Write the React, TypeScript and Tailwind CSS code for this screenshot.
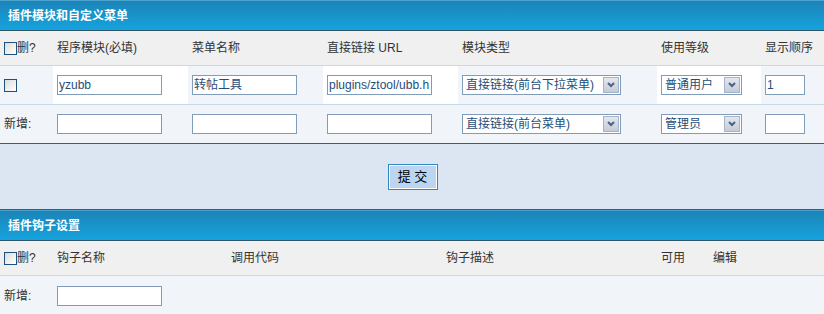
import { FC, ReactNode } from "react";

const font = { fontFamily: '"Liberation Sans", "Noto Sans CJK SC", sans-serif' };

// xp style checkbox
const Check: FC = () => (
  <span className="inline-block w-[13px] h-[13px] border border-[#1c5180] bg-gradient-to-br from-[#dcdcd6] to-white align-middle" />
);

const Field: FC<{ value?: string; w: string }> = ({ value = "", w }) => (
  <div
    className={`${w} h-[20px] border border-[#7f9db9] bg-white text-[12px] leading-[18px] px-[1px] text-[#1f4d78] overflow-hidden whitespace-nowrap`}
  >
    {value}
  </div>
);

const Select: FC<{ value: string; w: string }> = ({ value, w }) => (
  <div
    className={`${w} h-[20px] border border-[#7f9db9] bg-white flex items-center justify-between pl-[3px] pr-[1px]`}
  >
    <span className="text-[12px] text-[#1f4d78] whitespace-nowrap">{value}</span>
    <span className="w-[16px] h-[16px] border border-[#a5b4c8] bg-gradient-to-b from-[#e3e7f0] to-[#c4cbd8] flex items-center justify-center">
      <svg width="8" height="6" viewBox="0 0 8 6">
        <path d="M1 1 L4 4 L7 1" stroke="#4d6185" strokeWidth="2" fill="none" />
      </svg>
    </span>
  </div>
);

const TitleBar: FC<{ children: ReactNode }> = ({ children }) => (
  <div className="h-[31px] bg-gradient-to-b from-[#1b84b8] to-[#15a3dd] border-t border-t-[#4aa3cf] border-b border-b-[#2f5566] flex items-center px-[8px]">
    <span className="text-white font-bold text-[12px]">{children}</span>
  </div>
);

const Cell: FC<{ children?: ReactNode; white?: boolean }> = ({ children, white }) => (
  <div className={`flex items-center px-[4px] ${white ? "bg-white" : ""}`}>{children}</div>
);

const cols1 = "grid grid-cols-[53px_135px_135px_135px_199px_104px_1fr]";
const cols2 = "grid grid-cols-[53px_174px_215px_215px_52px_1fr]";

const App: FC = () => {
  return (
    <div className="w-[824px] h-[314px] overflow-hidden bg-[#f1f4f8] text-[#333] text-[12px]" style={font}>
      <TitleBar>插件模块和自定义菜单</TitleBar>

      {/* header */}
      <div className={`${cols1} h-[35px] bg-[#f0f0f0] border-b border-[#c6dae8]`}>
        <Cell>
          <Check />
          <span>删?</span>
        </Cell>
        <Cell>程序模块(必填)</Cell>
        <Cell>菜单名称</Cell>
        <Cell>直接链接 URL</Cell>
        <Cell>模块类型</Cell>
        <Cell>使用等级</Cell>
        <Cell>显示顺序</Cell>
      </div>

      {/* row */}
      <div className={`${cols1} h-[39px] border-b border-[#c6dae8]`}>
        <Cell>
          <Check />
        </Cell>
        <Cell white>
          <Field w="w-[105px]" value="yzubb" />
        </Cell>
        <Cell>
          <Field w="w-[105px]" value="转帖工具" />
        </Cell>
        <Cell white>
          <Field w="w-[105px]" value="plugins/ztool/ubb.h" />
        </Cell>
        <Cell>
          <Select w="w-[159px]" value="直接链接(前台下拉菜单)" />
        </Cell>
        <Cell white>
          <Select w="w-[81px]" value="普通用户" />
        </Cell>
        <Cell>
          <Field w="w-[40px]" value="1" />
        </Cell>
      </div>

      {/* add row */}
      <div className={`${cols1} h-[39px] border-b border-[#4b5a5e]`}>
        <Cell>新增:</Cell>
        <Cell>
          <Field w="w-[105px]" />
        </Cell>
        <Cell>
          <Field w="w-[105px]" />
        </Cell>
        <Cell>
          <Field w="w-[105px]" />
        </Cell>
        <Cell>
          <Select w="w-[159px]" value="直接链接(前台菜单)" />
        </Cell>
        <Cell>
          <Select w="w-[81px]" value="管理员" />
        </Cell>
        <Cell>
          <Field w="w-[40px]" />
        </Cell>
      </div>

      {/* submit */}
      <div className="h-[66px] bg-[#dce6f3] border-b border-[#4b5a5e] flex items-center justify-center">
        <button className="w-[50px] h-[26px] border border-[#2f8bbf] bg-[#bcd6f1] text-[13px] text-black shadow-[inset_0_0_0_1px_#ffffff] ml-[1px]">
          提 交
        </button>
      </div>

      <TitleBar>插件钩子设置</TitleBar>

      <div className={`${cols2} h-[35px] bg-[#f0f0f0] border-b border-[#c6dae8]`}>
        <Cell>
          <Check />
          <span>删?</span>
        </Cell>
        <Cell>钩子名称</Cell>
        <Cell>调用代码</Cell>
        <Cell>钩子描述</Cell>
        <Cell>可用</Cell>
        <Cell>编辑</Cell>
      </div>

      <div className={`${cols2} h-[39px]`}>
        <Cell>新增:</Cell>
        <Cell>
          <Field w="w-[105px]" />
        </Cell>
      </div>
    </div>
  );
};

export default App;
